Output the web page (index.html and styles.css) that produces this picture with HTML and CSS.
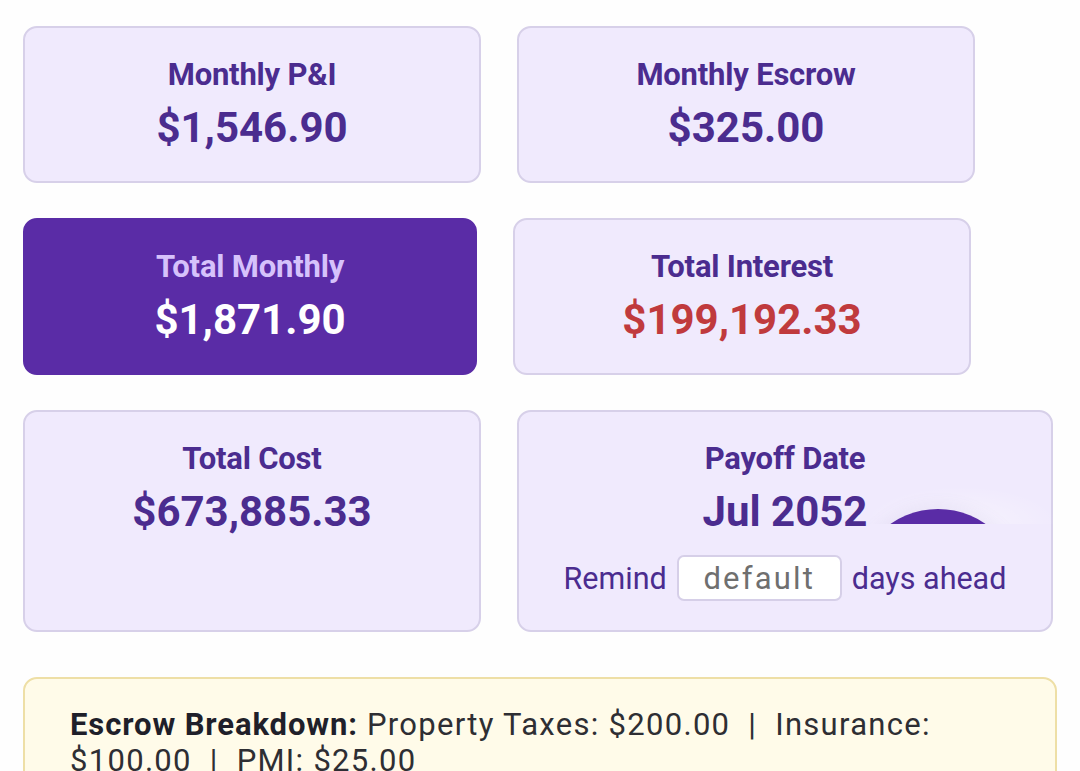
FILE: index.html
```html
<!DOCTYPE html>
<html lang="en">
<head>
<meta charset="utf-8">
<title>Mortgage Summary</title>
<link rel="stylesheet" href="styles.css">
</head>
<body>
<main class="page">
  <div class="row">
    <section class="card w458">
      <div class="label">Monthly P&amp;I</div>
      <div class="value">$1,546.90</div>
    </section>
    <section class="card w458">
      <div class="label">Monthly Escrow</div>
      <div class="value">$325.00</div>
    </section>
  </div>
  <div class="row">
    <section class="card card-primary w454">
      <div class="label">Total Monthly</div>
      <div class="value">$1,871.90</div>
    </section>
    <section class="card w458">
      <div class="label">Total Interest</div>
      <div class="value value-red">$199,192.33</div>
    </section>
  </div>
  <div class="row">
    <section class="card w458">
      <div class="label">Total Cost</div>
      <div class="value">$673,885.33</div>
    </section>
    <section class="card card-payoff w536">
      <div class="label">Payoff Date</div>
      <div class="value">Jul 2052</div>
      <div class="remind">
        <span>Remind</span>
        <input class="remind-input" type="text" placeholder="default">
        <span>days ahead</span>
      </div>
      <div class="fab-clip"><div class="fab"></div></div>
    </section>
  </div>
  <section class="escrow">
    <p><strong>Escrow Breakdown:</strong> Property Taxes: $200.00 &nbsp;|&nbsp; Insurance: $100.00 &nbsp;|&nbsp; PMI: $25.00</p>
  </section>
</main>
</body>
</html>
```

FILE: styles.css
```css
html, body {
  margin: 0;
  padding: 0;
  background: #fefefe;
  overflow: hidden;
}
body {
  font-family: Roboto, "Liberation Sans", Arial, sans-serif;
}
.page {
  padding: 26px 0 0 23px;
  display: flex;
  flex-direction: column;
  gap: 35px;
}
.row {
  display: flex;
  gap: 36px;
  align-items: stretch;
}
.card {
  box-sizing: border-box;
  background: #f0eafd;
  border: 2px solid #d7d0e9;
  border-radius: 14px;
  padding: 29px 20px 29px;
  display: flex;
  flex-direction: column;
  align-items: center;
  color: #4b2c8f;
}
.w458 { width: 458px; }
.w454 { width: 454px; }
.w536 { width: 536px; }
.label {
  font-size: 31px;
  font-weight: 700;
  line-height: 35px;
  letter-spacing: -0.2px;
}
.value {
  font-size: 42px;
  font-weight: 700;
  line-height: 49px;
  margin-top: 11px;
}
.value-red {
  color: #c03a3d;
}
.card-primary {
  background: #5a2ca6;
  border-color: #5a2ca6;
}
.card-primary .label {
  color: #d6c2fb;
}
.card-primary .value {
  color: #ffffff;
}
.card-payoff {
  position: relative;
}
.remind {
  display: flex;
  align-items: center;
  gap: 10px;
  margin-top: 19px;
  font-size: 30.5px;
  color: #4b2c8f;
}
.remind-input {
  box-sizing: border-box;
  width: 165px;
  height: 46px;
  border: 2px solid #d6cfe8;
  border-radius: 7px;
  background: #ffffff;
  font-family: Roboto, "Liberation Sans", Arial, sans-serif;
  font-size: 31px;
  letter-spacing: 2.2px;
  text-align: center;
  color: #666;
  padding: 0 4px;
}
.remind-input::placeholder {
  color: #6f6f6f;
}
.fab-clip {
  position: absolute;
  left: 350px;
  top: 76px;
  width: 184px;
  height: 36px;
  overflow: hidden;
  background: radial-gradient(ellipse at 50% 100%, rgba(255,255,255,0.45), rgba(255,255,255,0) 75%);
}
.fab {
  position: absolute;
  left: -14px;
  top: 21px;
  width: 166px;
  height: 166px;
  border-radius: 50%;
  background: #5a2ca6;
  box-shadow: 0 0 16px 4px rgba(120, 100, 160, 0.08);
}
.escrow {
  box-sizing: border-box;
  width: 1034px;
  margin-top: 10px;
  background: #fffbe9;
  border: 2px solid #eedfa6;
  border-radius: 14px;
  padding: 28px 45px;
  color: #2e2e33;
  font-size: 31px;
  letter-spacing: 1.3px;
  line-height: 36px;
}
.escrow p {
  margin: 0;
}
.escrow strong {
  color: #1f1f2a;
  font-weight: 700;
  letter-spacing: 0.9px;
}
```
